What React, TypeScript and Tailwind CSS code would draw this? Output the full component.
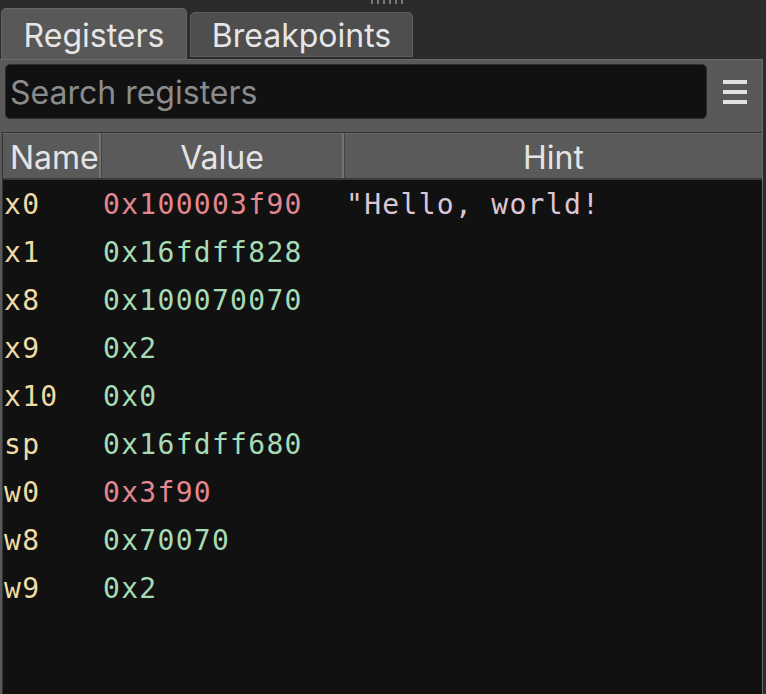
import React from "react";

const rows: { n: string; v: string; red?: boolean; h?: string }[] = [
  { n: "x0", v: "0x100003f90", red: true, h: "\"Hello, world!" },
  { n: "x1", v: "0x16fdff828" },
  { n: "x8", v: "0x100070070" },
  { n: "x9", v: "0x2" },
  { n: "x10", v: "0x0" },
  { n: "sp", v: "0x16fdff680" },
  { n: "w0", v: "0x3f90", red: true },
  { n: "w8", v: "0x70070" },
  { n: "w9", v: "0x2" },
];

const sans = { fontFamily: "Inter, 'Noto Sans', sans-serif" };
const mono = { fontFamily: "'DejaVu Sans Mono', monospace" };

export default function App() {
  return (
    <div className="w-[766px] h-[694px] bg-[#2b2b2b] overflow-hidden flex flex-col" style={sans}>
      {/* top strip with grip + tabs */}
      <div className="h-[59px] flex flex-col shrink-0">
        <div className="h-[4px] flex justify-center pl-[8px] gap-[4px]">
          {[0, 1, 2, 3, 4, 5].map((i) => (
            <div key={i} className="w-[2px] h-[4px] bg-[#777]" />
          ))}
        </div>
        <div className="flex-1 flex items-end gap-[3px]">
          <div className="ml-[1px] w-[186px] h-[51px] bg-[#585858] border border-b-0 border-[#666] rounded-t-[5px] flex items-center justify-center text-[32px] text-[#e6e6e6] leading-none pt-[3px]">
            Registers
          </div>
          <div className="mb-[2px] w-[223px] h-[45px] bg-[#4e4e4e] border border-[#5e5e5e] rounded-t-[5px] flex items-center justify-center text-[32px] text-[#e6e6e6] leading-none pt-[3px]">
            Breakpoints
          </div>
        </div>
      </div>

      {/* panel */}
      <div className="flex-1 mr-[3px] bg-[#595959] border-t border-r border-[#6a6a6a] flex flex-col min-h-0">
        <div className="flex items-center pt-[4px]">
          <div className="ml-[5px] w-[702px] h-[55px] bg-[#111] border border-[#2e2e2e] rounded-[5px] flex items-center pl-[4px] pt-[3px] text-[32px] text-[#8b8b8b] leading-none">
            Search registers
          </div>
          <div className="flex-1 flex justify-center">
            <div className="w-[24px] flex flex-col gap-[6px]">
              <div className="h-[4px] bg-[#e2e2e2]" />
              <div className="h-[4px] bg-[#e2e2e2]" />
              <div className="h-[4px] bg-[#e2e2e2]" />
            </div>
          </div>
        </div>

        <div className="mt-[13px] ml-[2px] flex-1 bg-[#111] border-t border-l border-[#333] flex flex-col min-h-0">
          {/* header */}
          <div className="grid grid-cols-[98px_243px_1fr] h-[47px] bg-[#5a5a5a] border-b-2 border-[#3a3a3a] text-[32px] text-[#e4e4e4] leading-none">
            <div className="flex items-center pl-[7px] pt-[4px] border-t border-[#6a6a6a] border-r-2 border-r-[#737373]">Name</div>
            <div className="flex items-center justify-center pt-[4px] border-t border-[#6a6a6a] border-l border-l-[#444] border-r-2 border-r-[#737373]">Value</div>
            <div className="flex items-center justify-center pt-[4px] border-t border-[#6a6a6a] border-l border-l-[#444]">Hint</div>
          </div>
          {rows.map((r) => (
            <div key={r.n} className="grid grid-cols-[98px_243px_1fr] h-[48px] items-center pt-[2px] text-[28px] tracking-[1.3px] leading-none" style={mono}>
              <div className="pl-[1px] text-[#efdba6]">{r.n}</div>
              <div className={"pl-[2px] " + (r.red ? "text-[#e3878f]" : "text-[#a6dbb6]")}>{r.v}</div>
              <div className="pl-[2px] text-[#dcc6d6]">{r.h ?? ""}</div>
            </div>
          ))}
        </div>
      </div>
    </div>
  );
}
